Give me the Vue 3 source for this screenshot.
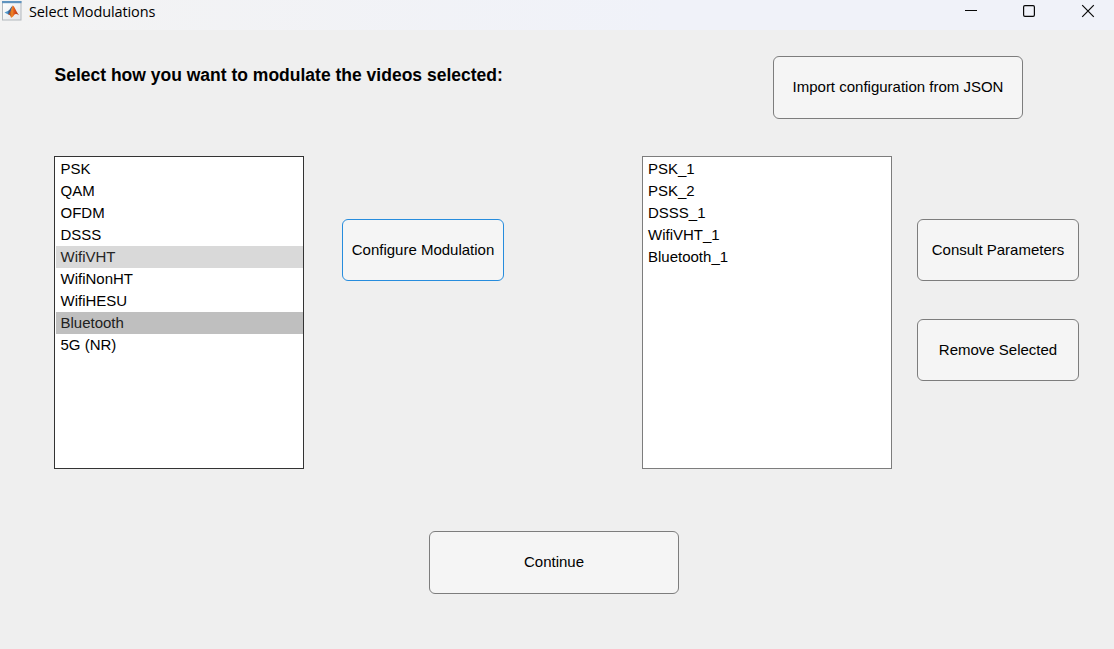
<script setup>
import { ref } from 'vue'

const modulations = ['PSK', 'QAM', 'OFDM', 'DSSS', 'WifiVHT', 'WifiNonHT', 'WifiHESU', 'Bluetooth', '5G (NR)']
const hovered = ref('WifiVHT')
const selected = ref('Bluetooth')
const configured = ['PSK_1', 'PSK_2', 'DSSS_1', 'WifiVHT_1', 'Bluetooth_1']
</script>

<template>
  <div class="window">
    <header class="titlebar">
      <svg class="logo" width="20" height="20" viewBox="0 0 20 20">
        <defs>
          <linearGradient id="flame" x1="0" x2="1" y1="0" y2="0">
            <stop offset="0" stop-color="#8e2410" />
            <stop offset="0.35" stop-color="#f08a28" />
            <stop offset="0.55" stop-color="#e0571c" />
            <stop offset="1" stop-color="#a22b14" />
          </linearGradient>
          <linearGradient id="paper" x1="0" x2="1" y1="0" y2="1">
            <stop offset="0" stop-color="#ffffff" />
            <stop offset="1" stop-color="#e3e6ea" />
          </linearGradient>
        </defs>
        <rect x="0.5" y="0.5" width="18.5" height="18.5" fill="url(#paper)" stroke="#b4b9be" />
        <rect x="0" y="0" width="19.5" height="2.2" fill="#5f93bf" />
        <path d="M2.5 11.4L6.3 9.7L8.6 11.5L6.2 13.4Z" fill="#4f97cc" />
        <path d="M6.3 9.7C8 9 8.9 6 10.8 4.6L8.6 11.5L6.2 13.4Z" fill="#3a5f90" />
        <path d="M10.8 4.6C12.6 5.5 14.1 10.5 17 14.2C14.5 12.6 13.1 12.6 11.8 14.4C10.8 15.8 10 16.5 9 16.7C8.5 14.5 7.5 13.4 6.2 13.4C8.8 12 9.3 7 10.8 4.6Z" fill="url(#flame)" />
      </svg>
      <span class="caption">Select Modulations</span>
      <svg class="controls" width="132" height="24" viewBox="0 0 132 24" fill="none" stroke="#080808">
        <path d="M1 10.5H13" />
        <rect x="59.6" y="5.6" width="10.8" height="10.8" rx="1.3" stroke-width="1.2" />
        <path d="M118.2 5.2L129.8 16.8M129.8 5.2L118.2 16.8" stroke-width="1.2" />
      </svg>
    </header>

    <main class="content">
      <section class="top">
        <h1>Select how you want to modulate the videos selected:</h1>
        <button class="wide import">Import configuration from JSON</button>
      </section>

      <section class="middle">
        <ul class="list focused">
          <li v-for="m in modulations" :key="m" :class="{ hover: m === hovered, selected: m === selected }" @click="selected = m">{{ m }}</li>
        </ul>
        <button class="configure">Configure Modulation</button>
        <ul class="list configured">
          <li v-for="m in configured" :key="m">{{ m }}</li>
        </ul>
        <div class="actions">
          <button>Consult Parameters</button>
          <button>Remove Selected</button>
        </div>
      </section>

      <button class="wide continue">Continue</button>
    </main>
  </div>
</template>

<style>
body {
  margin: 0;
  overflow: hidden;
}
</style>

<style scoped>
.window {
  width: 1114px;
  height: 649px;
  background: #efefef;
  font-family: "Liberation Sans", Arial, sans-serif;
  font-size: 15px;
  color: #000;
}
.titlebar {
  display: flex;
  height: 30px;
  box-sizing: border-box;
  padding: 0 18px 0 2px;
  background: linear-gradient(90deg, #f3f3f3, #f0f2f9 60%);
}
.logo {
  margin-top: 1px;
}
.caption {
  margin-left: 7px;
  font-family: "Open Sans", "Noto Sans", sans-serif;
  font-size: 14.5px;
  line-height: 23px;
  letter-spacing: -0.12px;
  white-space: nowrap;
}
.controls {
  margin-left: auto;
}
.content {
  display: flex;
  flex-direction: column;
  padding: 26px 35px 0 54px;
}
.top {
  display: flex;
  justify-content: space-between;
  height: 100px;
}
h1 {
  margin: 8px 0 0 0.5px;
  font-size: 17.5px;
  line-height: 22px;
  font-weight: bold;
  white-space: nowrap;
}
.middle {
  display: flex;
  height: 313px;
}
.list {
  width: 250px;
  height: 313px;
  box-sizing: border-box;
  margin: 0;
  padding: 1px 0 0 1px;
  list-style: none;
  background: #fff;
  border: 1px solid #7d7d7d;
}
.list.focused {
  border-color: #333;
}
.list li {
  height: 22px;
  padding-left: 4.5px;
  line-height: 22px;
}
.list.configured li {
  padding-left: 4px;
}
.list .hover {
  background: #d9d9d9;
  color: #262626;
}
.list .selected {
  background: #bfbfbf;
  color: #212121;
}
button {
  width: 162px;
  height: 62px;
  box-sizing: border-box;
  padding: 0 0 2px;
  font: inherit;
  color: #000;
  background: #f5f5f5;
  border: 1px solid #7d7d7d;
  border-radius: 6px;
  white-space: nowrap;
}
.wide {
  width: 250px;
  height: 63px;
}
.import {
  margin-right: 56px;
}
.configure {
  margin: 63px 138px 0 38px;
  border-color: #268cdd;
}
.actions {
  display: flex;
  flex-direction: column;
  gap: 38px;
  margin: 63px 0 0 25px;
}
.continue {
  margin: 62px 0 0 375px;
}
</style>
